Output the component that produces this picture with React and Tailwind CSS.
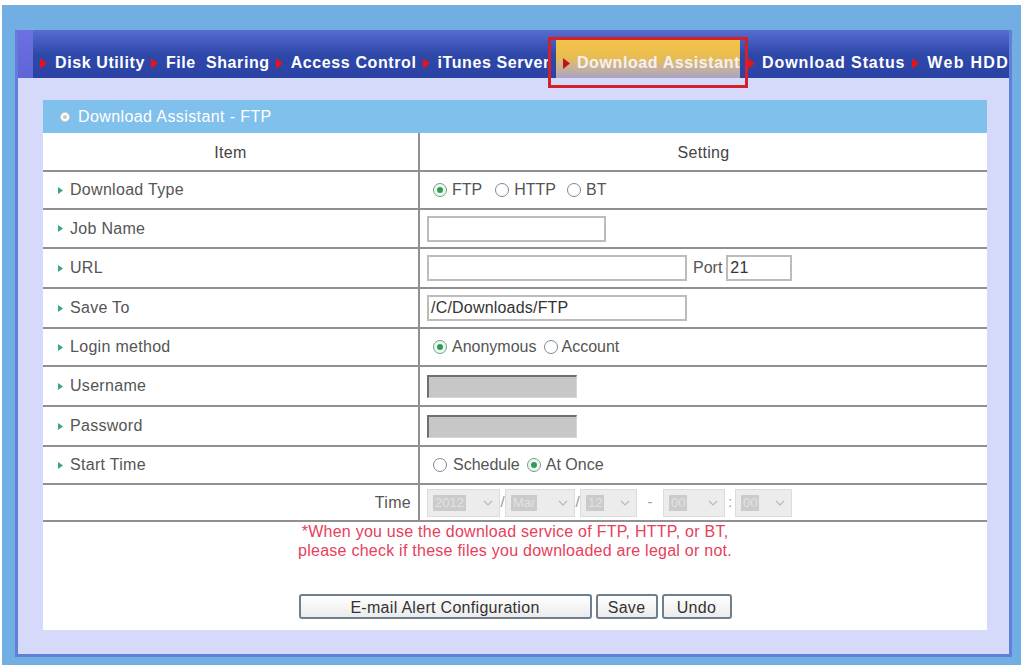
import React from "react";

const Arrow = ({ color = "#e3141c" }) => (
  <svg width="7" height="11" viewBox="0 0 7 11" className="shrink-0">
    <path d="M0 0 L7 5.5 L0 11 Z" fill={color} />
  </svg>
);

const Bullet = () => (
  <svg width="5" height="7" viewBox="0 0 5 7" className="shrink-0">
    <path d="M0 0 L5 3.5 L0 7 Z" fill="#3aa58a" />
  </svg>
);

const Radio = ({ checked }) =>
  checked ? (
    <span className="inline-flex items-center justify-center w-[14px] h-[14px] rounded-full border border-[#6f9f83] bg-[#eef7f1] shrink-0">
      <span className="w-[6px] h-[6px] rounded-full bg-[#2f9a56]" />
    </span>
  ) : (
    <span className="inline-block w-[14px] h-[14px] rounded-full border border-[#7d8a9a] bg-white shrink-0" />
  );

const Chevron = () => (
  <svg width="10" height="6" viewBox="0 0 10 6" className="shrink-0">
    <path d="M1 1 L5 5 L9 1" fill="none" stroke="#b9b9b9" strokeWidth="1.2" />
  </svg>
);

const Sel = ({ className, val }) => (
  <div className={"flex items-center justify-between h-[28px] bg-[#ececec] border border-[#dcdcdc] pl-[5px] pr-[6px] " + className}>
    <span className="bg-[#cbcbcb] text-[#e2e2e2] text-[13px] leading-[16px] px-[2px]">{val}</span>
    <Chevron />
  </div>
);

const Label = ({ children }) => (
  <div className="flex items-center gap-[7px] pl-[15px] text-[#555] text-[16px] tracking-[0.3px]">
    <Bullet />
    <span>{children}</span>
  </div>
);

const Row = ({ h, left, children, rightClass = "" }) => (
  <div className={"flex border-b-2 border-[#909090] " + h}>
    <div className="w-[377px] shrink-0 border-r-2 border-[#909090] flex items-center">{left}</div>
    <div className={"flex-1 flex items-center " + rightClass}>{children}</div>
  </div>
);

const Input = ({ className, value = "" }) => (
  <div className={"border-2 border-[#bcbcbc] bg-white flex items-center pl-[2px] text-[16px] tracking-[0.2px] text-[#333] " + className}>
    {value}
  </div>
);

const Disabled = ({ className }) => (
  <div className={"bg-[#c7c7c7] border-t-2 border-l-2 border-[#707070] border-b border-r border-b-[#d6d6d6] border-r-[#d6d6d6] " + className} />
);

const navItems = [
  "Disk Utility",
  "File\u00a0 Sharing",
  "Access Control",
  "iTunes Server",
];

export default function App() {
  return (
    <div className="w-[1023px] h-[668px] bg-white pt-[5px] overflow-hidden font-['Liberation_Sans',Arial,sans-serif]">
      <div className="ml-[2px] mr-[2px] h-[660px] bg-[#71aee3] pl-[13px] pr-[9px] pt-[25px]">
        <div className="relative h-[627px] bg-[#d6dafa] border-x-[3px] border-b-[3px] border-[#5f7fd8] flex flex-col">
          {/* nav */}
          <div className="h-[48px] flex shrink-0">
            <div className="w-[15px] bg-gradient-to-b from-[#6c70e0] to-[#6064d8]" />
            <div className="flex-1 flex items-stretch pt-[8px] pl-[7px] bg-gradient-to-b from-[#5a6cd0] via-[#2e48aa] to-[#2a42a3] text-white font-bold text-[16px] tracking-[0.6px] leading-[18px] overflow-hidden">
              {navItems.map((t) => (
                <div key={t} className="flex items-end pb-[6px] gap-[8px] mr-[6px]">
                  <span className="pb-[3px]"><Arrow /></span>
                  <span className="whitespace-nowrap">{t}</span>
                </div>
              ))}
              <div className="flex items-end pb-[6px] gap-[7px] pl-[7px] shrink-0 bg-gradient-to-b from-[#f5c443] via-[#e8bc52] to-[#aaa3c4] text-[#f4f0f6]">
                <span className="pb-[3px]"><Arrow color="#c0141c" /></span>
                <span className="whitespace-nowrap">Download Assistant</span>
              </div>
              <div className="flex items-end pb-[6px] gap-[7px] ml-[8px] mr-[7px]">
                <span className="pb-[3px]"><Arrow /></span>
                <span className="whitespace-nowrap tracking-[0.9px]">Download Status</span>
              </div>
              <div className="flex items-end pb-[6px] gap-[8px]">
                <span className="pb-[3px]"><Arrow /></span>
                <span className="whitespace-nowrap tracking-[1.3px]">Web HDD</span>
              </div>
            </div>
          </div>

          {/* red annotation box */}
          <div className="absolute left-[530px] top-[7px] w-[200px] h-[51px] border-[3px] border-[#d4202a]" />

          {/* content */}
          <div className="pl-[25px] pr-[22px] pt-[22px]">
            <div className="h-[530px] flex flex-col bg-white">
              <div className="h-[33px] shrink-0 bg-[#80c0ec] flex items-center pl-[17px] gap-[8px] text-white text-[16px] tracking-[0.4px]">
                <span className="w-[10px] h-[10px] rounded-full bg-white border border-[#d0d0d0] flex items-center justify-center">
                  <span className="w-[4px] h-[4px] rounded-full bg-[#c8c8c8]" />
                </span>
                <span>Download Assistant - FTP</span>
              </div>

              <div className="flex border-b-2 border-[#909090] h-[39px] text-[16px] tracking-[0.3px] text-[#444]">
                <div className="w-[377px] shrink-0 border-r-2 border-[#909090] flex items-center justify-center pt-[3px]">Item</div>
                <div className="flex-1 flex items-center justify-center pt-[3px]">Setting</div>
              </div>

              <Row h="h-[38px]" left={<Label>Download Type</Label>} rightClass="pl-[13px] text-[16px] text-[#555]">
                <Radio checked />
                <span className="ml-[5px] mr-[13px]">FTP</span>
                <Radio />
                <span className="ml-[5px] mr-[11px]">HTTP</span>
                <Radio />
                <span className="ml-[5px]">BT</span>
              </Row>

              <Row h="h-[39px]" left={<Label>Job Name</Label>} rightClass="pl-[7px]">
                <Input className="w-[179px] h-[26px]" />
              </Row>

              <Row h="h-[40px]" left={<Label>URL</Label>} rightClass="pl-[7px] text-[16px] text-[#555]">
                <Input className="w-[260px] h-[26px]" />
                <span className="ml-[6px] mr-[4px]">Port</span>
                <Input className="w-[66px] h-[26px]" value="21" />
              </Row>

              <Row h="h-[40px]" left={<Label>Save To</Label>} rightClass="pl-[7px]">
                <Input className="w-[260px] h-[26px]" value="/C/Downloads/FTP" />
              </Row>

              <Row h="h-[38px]" left={<Label>Login method</Label>} rightClass="pl-[13px] text-[16px] text-[#555]">
                <Radio checked />
                <span className="ml-[5px] mr-[7px]">Anonymous</span>
                <Radio />
                <span className="ml-[4px]">Account</span>
              </Row>

              <Row h="h-[40px]" left={<Label>Username</Label>} rightClass="pl-[7px]">
                <Disabled className="w-[150px] h-[23px]" />
              </Row>

              <Row h="h-[40px]" left={<Label>Password</Label>} rightClass="pl-[7px]">
                <Disabled className="w-[150px] h-[23px]" />
              </Row>

              <Row h="h-[38px]" left={<Label>Start Time</Label>} rightClass="pl-[13px] text-[16px] text-[#555]">
                <Radio />
                <span className="ml-[6px] mr-[7px]">Schedule</span>
                <Radio checked />
                <span className="ml-[5px]">At Once</span>
              </Row>

              <div className="flex border-b-2 border-[#909090] h-[37px]">
                <div className="w-[377px] shrink-0 border-r-2 border-[#909090] flex items-center justify-end pr-[7px] text-[16px] tracking-[0.3px] text-[#555]">
                  Time
                </div>
                <div className="flex-1 flex items-center pl-[7px] text-[15px] text-[#999]">
                  <Sel className="w-[73px]" val="2012" />
                  <span className="w-[5px] text-center">/</span>
                  <Sel className="w-[70px]" val="Mar" />
                  <span className="w-[5px] text-center">/</span>
                  <Sel className="w-[57px]" val="12" />
                  <span className="w-[26px] text-center">-</span>
                  <Sel className="w-[62px]" val="00" />
                  <span className="w-[10px] text-center">:</span>
                  <Sel className="w-[57px]" val="00" />
                </div>
              </div>

              <div className="flex-1 flex flex-col items-center">
                <div className="text-[#e8405a] text-[16px] tracking-[0.25px] leading-[19px] text-center">
                  <div>*When you use the download service of FTP, HTTP, or BT,</div>
                  <div>please check if these files you downloaded are legal or not.</div>
                </div>
                <div className="flex gap-[4px] mt-[34px] text-[16px] tracking-[0.3px] text-[#333]">
                  <button className="w-[293px] h-[25px] rounded-[3px] border-2 border-[#6e8090] bg-gradient-to-b from-white to-[#ebebeb]">
                    E-mail Alert Configuration
                  </button>
                  <button className="w-[62px] h-[25px] rounded-[3px] border-2 border-[#6e8090] bg-gradient-to-b from-white to-[#ebebeb]">
                    Save
                  </button>
                  <button className="w-[70px] h-[25px] rounded-[3px] border-2 border-[#6e8090] bg-gradient-to-b from-white to-[#ebebeb]">
                    Undo
                  </button>
                </div>
              </div>
            </div>
          </div>
        </div>
      </div>
    </div>
  );
}
